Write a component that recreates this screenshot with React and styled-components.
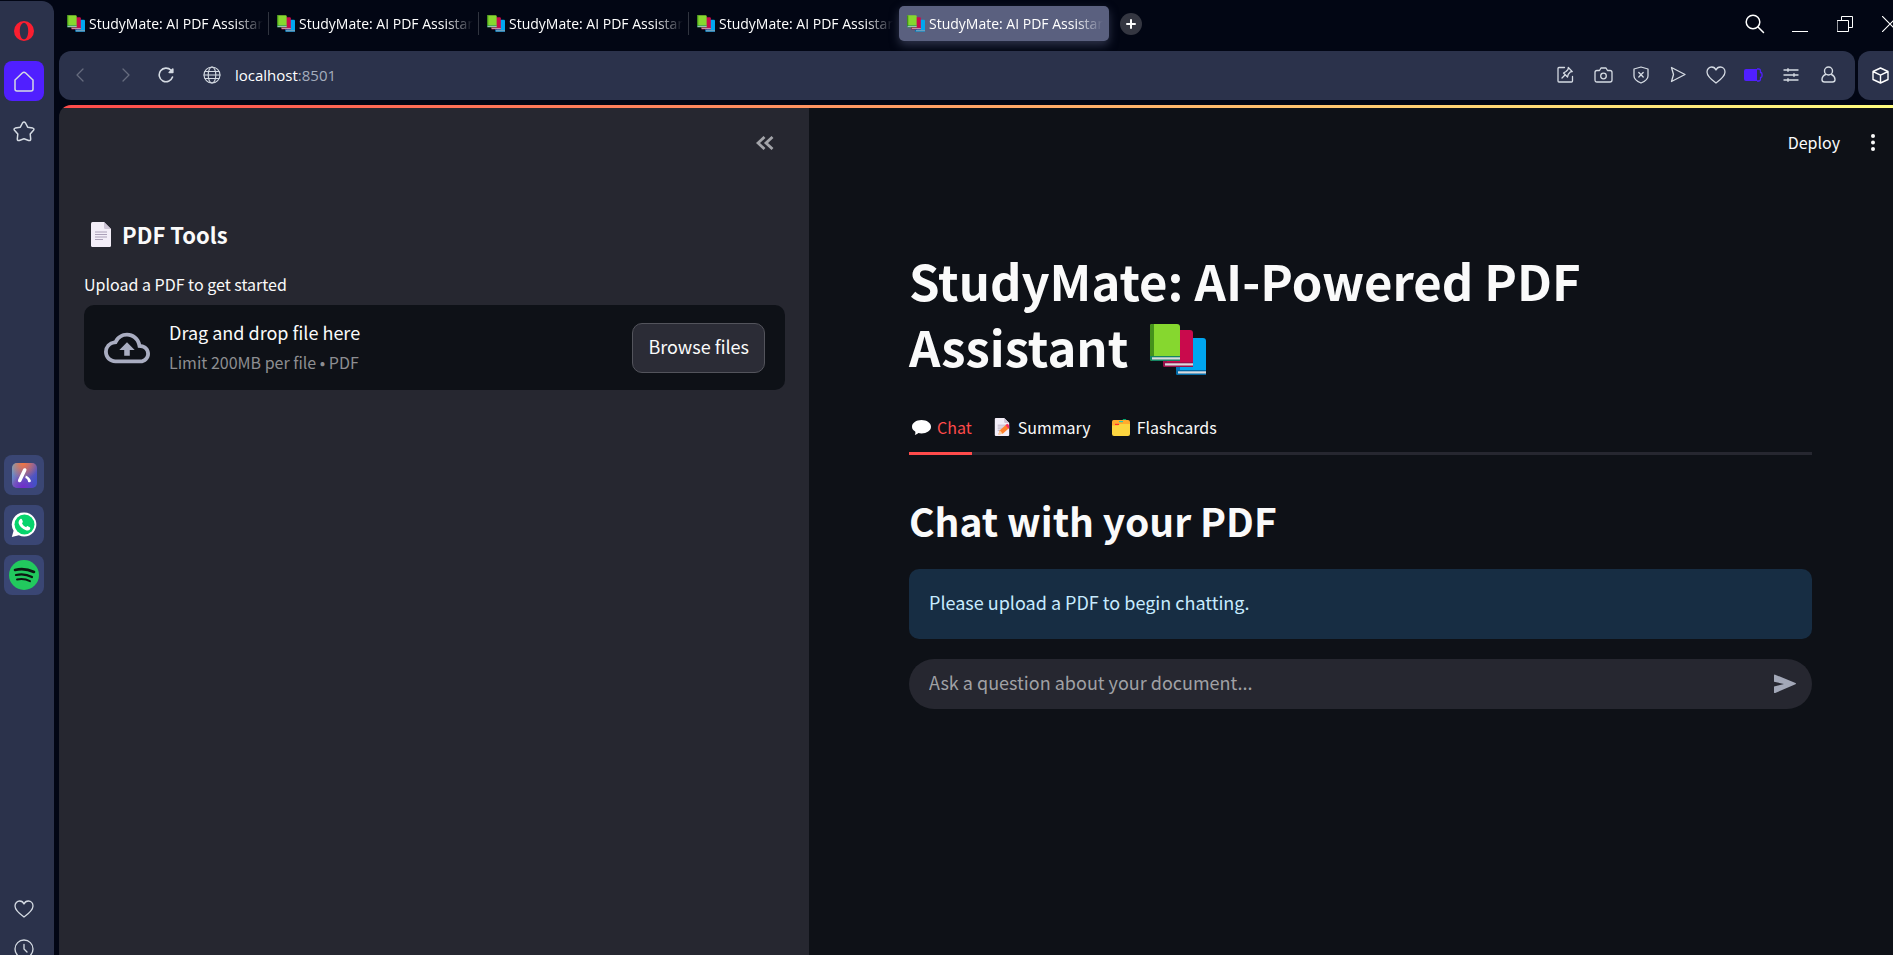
import React, { useState } from "react";
import styled, { createGlobalStyle } from "styled-components";

const GlobalStyle = createGlobalStyle`
  *, *::before, *::after { box-sizing: border-box; }
  body { margin: 0; background: #020614; }
  h1, h2, h3, p { margin: 0; }
  button { font: inherit; color: inherit; background: none; border: 0; padding: 0; cursor: pointer; }
  svg { display: block; flex: none; }
`;

const browserFont = `"Open Sans", "Noto Sans", sans-serif`;
const appFont = `"Noto Sans CJK JP", "Noto Sans", sans-serif`;

/* ---------- browser window ---------- */

const Window = styled.div`
  display: flex;
  gap: 5px;
  height: 100vh;
  overflow: hidden;
  background: #020614;
  color: #fff;
  font-family: ${browserFont};
`;

const Rail = styled.nav`
  flex: none;
  display: flex;
  flex-direction: column;
  width: 54px;
  margin-top: 1px;
  padding: 10px 10px 0 4px;
  border-radius: 0 12px 0 0;
  background: #2b324b;
  color: #d5dbe3;
  overflow: hidden;
`;

const RailGroup = styled.div`
  display: flex;
  flex-direction: column;
  gap: ${(p) => p.$gap || 0}px;
  margin-top: ${(p) => p.$top || "0"};
  margin-bottom: ${(p) => p.$bottom || "0"};
`;

const RailButton = styled.button`
  display: grid;
  place-items: center;
  width: 40px;
  height: 40px;
  border-radius: 8px;
  background: ${(p) => p.$fill || "transparent"};
`;

const Stage = styled.div`
  flex: 1;
  min-width: 0;
  display: flex;
  flex-direction: column;
`;

const TabStrip = styled.header`
  flex: none;
  display: flex;
  align-items: center;
  justify-content: space-between;
  height: 51px;
  padding-bottom: 4px;
  overflow: hidden;
`;

const TabList = styled.div`
  display: flex;
  align-items: center;
`;

const BrowserTab = styled.button`
  display: flex;
  align-items: center;
  gap: 4px;
  width: 210px;
  height: 35px;
  padding: 0 6px 0 8px;
  border-radius: 5px;
  font-size: 14px;
  line-height: 20px;
  background: ${(p) => (p.$active ? "#5a607f" : "transparent")};
  box-shadow: ${(p) => (p.$active ? "0 4px 10px rgba(90, 96, 127, 0.5)" : "none")};
`;

const TabTitle = styled.span`
  flex: 1;
  min-width: 0;
  overflow: hidden;
  white-space: nowrap;
  text-align: left;
  mask-image: linear-gradient(to right, #000 84%, transparent 100%);
`;

const TabDivider = styled.span`
  width: 1px;
  height: 23px;
  margin-left: -1px;
  background: #30343f;
`;

const NewTab = styled.button`
  display: grid;
  place-items: center;
  width: 22px;
  height: 22px;
  margin-left: 11px;
  border-radius: 50%;
  background: #343641;
`;

const WindowControls = styled.div`
  display: flex;
  margin-right: -19px;
`;

const ControlButton = styled.button`
  display: grid;
  place-items: center;
  width: 45px;
  height: 40px;
`;

const AddressRow = styled.div`
  flex: none;
  display: flex;
  gap: 3px;
  height: 49px;
  margin-bottom: 5px;
`;

const AddressBar = styled.div`
  flex: 1;
  display: flex;
  align-items: center;
  justify-content: space-between;
  padding: 0 8px 2px 8px;
  border-radius: 12px;
  background: #2b324b;
  color: #d5dbe3;
`;

const BarGroup = styled.div`
  display: flex;
  align-items: center;
`;

const BarButton = styled.button`
  display: grid;
  place-items: center;
  width: ${(p) => p.$width || 37}px;
  height: 40px;
  color: ${(p) => (p.$dim ? "#666c7e" : "inherit")};
`;

const SiteButton = styled(BarButton)`
  margin-left: 17px;
`;

const UrlText = styled.a`
  font-size: 15px;
  line-height: 20px;
  color: #fff;
  text-decoration: none;
`;

const Port = styled.span`
  color: #a4adbd;
`;

const PanelToggle = styled.button`
  display: grid;
  place-items: center;
  width: 35px;
  padding-left: 9px;
  border-radius: 12px 0 0 12px;
  background: #2b324b;
  color: #fff;
`;

/* ---------- page inside the window ---------- */

const Page = styled.div`
  flex: 1;
  min-height: 0;
  display: flex;
  flex-direction: column;
  border-radius: 12px 0 0 0;
  overflow: hidden;
  background: #0e1117;
  color: #fafafa;
  font-family: ${appFont};
  font-size: 18px;
  line-height: 30px;
`;

const Decoration = styled.div`
  flex: none;
  height: 3px;
  background: linear-gradient(90deg, #ff4b4b, #fffd80);
`;

const Columns = styled.div`
  flex: 1;
  min-height: 0;
  display: flex;
`;

const Sidebar = styled.aside`
  flex: none;
  width: 750px;
  padding: 20px 24px 0 25px;
  background: #262730;
`;

const SidebarHeader = styled.div`
  display: flex;
  justify-content: flex-end;
  height: 87px;
`;

const CollapseButton = styled.button`
  display: grid;
  place-items: center;
  width: 41px;
  height: 30px;
`;

const SidebarTitle = styled.h3`
  display: flex;
  align-items: center;
  gap: 5px;
  height: 38px;
  font-size: 22px;
  line-height: 30px;
  font-weight: 700;
`;

const Emoji = styled.span`
  display: grid;
  place-items: center;
  width: ${(p) => p.$width}px;
`;

const UploadLabel = styled.label`
  display: block;
  margin: 18px 0 8px;
  font-size: 16px;
  line-height: 26px;
`;

const DropZone = styled.div`
  display: flex;
  align-items: center;
  gap: 19px;
  height: 85px;
  padding: 0 20px;
  border-radius: 10px;
  background: #0e1117;
`;

const DropText = styled.div`
  flex: 1;
  padding-bottom: 1px;
`;

const Limit = styled.p`
  font-size: 16px;
  color: #8d8e91;
`;

const HiddenFile = styled.input`
  display: none;
`;

const BrowseButton = styled.button`
  height: 50px;
  padding: 0 15px 3px;
  border: 1px solid #53545c;
  border-radius: 10px;
  background: #2b2c36;
`;

const Main = styled.main`
  flex: 1;
  min-width: 0;
`;

const AppHeader = styled.div`
  display: flex;
  align-items: center;
  justify-content: flex-end;
  gap: 24px;
  height: 70px;
  padding: 0 12px 2px 0;
  font-size: 16px;
`;

const MenuButton = styled.button`
  display: grid;
  place-items: center;
  width: 17px;
  height: 30px;
`;

const Content = styled.div`
  padding: 69px 81px 0 100px;
`;

const Title = styled.h1`
  font-size: 49px;
  line-height: 66px;
  font-weight: 700;
`;

const InlineIcon = styled.span`
  display: inline-block;
  margin-left: 10px;
  vertical-align: -8px;
`;

const TabBar = styled.div`
  display: flex;
  gap: 18px;
  margin-top: 23px;
  border-bottom: 3px solid #262730;
`;

const AppTab = styled.button`
  display: flex;
  align-items: center;
  gap: 4px;
  height: 53px;
  margin-bottom: -3px;
  border-bottom: 3px solid ${(p) => (p.$active ? "#ff4b4b" : "transparent")};
  color: ${(p) => (p.$active ? "#ff4b4b" : "inherit")};
  font-size: 16px;
`;

const SectionTitle = styled.h2`
  margin: 38px 0 22px;
  font-size: 39px;
  line-height: 54px;
  font-weight: 700;
`;

const Notice = styled.p`
  padding: 18px 20px 22px;
  border-radius: 10px;
  background: #172d43;
  color: #c7ebff;
`;

const ChatForm = styled.form`
  display: flex;
  align-items: center;
  height: 50px;
  margin-top: 20px;
  padding: 0 15px 0 20px;
  border-radius: 25px;
  background: #262730;
`;

const ChatInput = styled.input`
  flex: 1;
  min-width: 0;
  height: 34px;
  padding: 0 0 4px;
  border: 0;
  outline: 0;
  background: transparent;
  color: #fafafa;
  font: inherit;
  &::placeholder { color: #a0a1a5; opacity: 1; }
`;

/* ---------- drawings ---------- */

const Line = ({ w = 20, h = w, box = `0 0 ${w} ${h}`, sw = 1.3, children }) => (
  <svg width={w} height={h} viewBox={box} fill="none" stroke="currentColor" strokeWidth={sw}
    strokeLinecap="round" strokeLinejoin="round" aria-hidden="true">{children}</svg>
);

const Book = ({ x, y, main, edge, base }) => (
  <g transform={`translate(${x} ${y})`}>
    <path d="M2 0h25q3 0 3 3v34H2q-2 0-2-2V2q0-2 2-2z" fill={main} />
    <path d="M2 0h2v33H0V2q0-2 2-2z" fill={edge} />
    <path d="M0 32h30v5H2q-2 0-2-2z" fill={base} />
    <path d="M2 33.3h28v2.2H2z" fill="#d9dadd" />
  </g>
);

const Books = ({ w, h }) => (
  <svg width={w} height={h} viewBox="0 0 56 51" aria-hidden="true">
    <Book x={26} y={14} main="#00a6f0" edge="#0074ba" base="#0069a5" />
    <Book x={13} y={6} main="#c90a4c" edge="#99104a" base="#99104a" />
    <Book x={0} y={0} main="#86d72f" edge="#44911b" base="#148463" />
  </svg>
);

const Sheet = ({ w, h, pencil }) => (
  <svg width={w} height={h} viewBox="0 0 20 25" aria-hidden="true">
    <path d="M1.500 0H13l7 7v16.500q0 1.500-1.500 1.500h-17Q0 25 0 23.500v-22Q0 0 1.500 0z" fill="#f3eef8" />
    <path d="M13 0l7 7h-5.500Q13 7 13 5.500z" fill="#cdc4d6" />
    <path d="M4 10h12M4 12.500h12M4 15h12M4 17.500h8" stroke="#aba0b8" strokeWidth="1" />
    {pencil && (
      <g>
        <path d="M5 23l2-6 9-8 4 5-9 8z" fill="#ff822d" />
        <path d="M5 23l2-6 4 5z" fill="#fcd0a1" />
        <path d="M15 10l2-2q2 0 3 3v2l-1 2z" fill="#f92f60" />
      </g>
    )}
  </svg>
);

const Bubble = () => (
  <svg width="19" height="15" viewBox="0 0 19 15" aria-hidden="true">
    <path d="M9.500 0C14.700 0 19 2.900 19 6.700s-4.300 6.700-9.500 6.700c-1.200 0-2.200-.1-3.200-.4-1 .9-2.500 1.800-3.600 1.800.7-.8.9-2 .5-3.300C1.200 10.300 0 8.600 0 6.700 0 2.900 4.300 0 9.500 0z" fill="#fff" />
  </svg>
);

const CardIndex = () => (
  <svg width="18" height="17" viewBox="0 0 18 17" aria-hidden="true">
    <path d="M11 0h3l1 3h-5z" fill="#00a66d" />
    <path d="M1.500 1H16q2 0 2 2v5H0V2.500Q0 1 1.500 1z" fill="#ffab2e" />
    <path d="M0 6.500h6l2-1.500h10V15q0 2-2 2H2q-2 0-2-2z" fill="#fcd53f" />
    <path d="M3 4.800h4v1.200H3z" fill="#f8312f" />
    <path d="M7 2h4v1.200H7z" fill="#26c9ae" />
  </svg>
);

const Heart = ({ w = 20 }) => (
  <Line w={w} h={18} box="0 0 20 18"><path d="M10 17C6.500 14.500 1 10.500 1 6c0-2.800 2-5 4.700-5C7.500 1 9.200 2 10 4c.8-2 2.500-3 4.300-3C17 1 19 3.200 19 6c0 4.500-5.500 8.500-9 11z" /></Line>
);

const Opera = () => (
  <svg width="20" height="20" viewBox="0 0 20 20" aria-hidden="true">
    <path fillRule="evenodd" d="M10 0a10 10 0 100 20 10 10 0 000-20zm0 1.700c2.500 0 4.200 3.600 4.200 8.300s-1.700 8.300-4.200 8.300S5.800 14.700 5.800 10 7.500 1.700 10 1.700z" fill="#fa1e30" />
  </svg>
);

const Aria = () => (
  <svg width="25" height="25" viewBox="0 0 25 25" aria-hidden="true">
    <defs>
      <linearGradient id="ariaBase" x1="0" y1="0" x2="1" y2="0.6">
        <stop offset="0" stopColor="#58b8dc" /><stop offset=".45" stopColor="#7562b8" /><stop offset="1" stopColor="#4451c4" />
      </linearGradient>
      <radialGradient id="ariaTop" cx=".45" cy="0" r=".65">
        <stop offset="0" stopColor="#f5753f" /><stop offset="1" stopColor="#f5753f" stopOpacity="0" />
      </radialGradient>
      <radialGradient id="ariaLow" cx=".45" cy="1" r=".5">
        <stop offset="0" stopColor="#7429cd" /><stop offset="1" stopColor="#7429cd" stopOpacity="0" />
      </radialGradient>
    </defs>
    <rect width="25" height="25" rx="5" fill="url(#ariaBase)" />
    <rect width="25" height="25" rx="5" fill="url(#ariaTop)" />
    <rect width="25" height="25" rx="5" fill="url(#ariaLow)" />
    <path d="M12.700 7L7.700 17.500" stroke="#fff" strokeWidth="3.600" strokeLinecap="round" />
    <path d="M13.800 12.500q4 1.500 5.200 5.500-.8 2-2.800 1-.6-3.500-2.900-4z" fill="#fff" />
  </svg>
);

const WhatsApp = () => (
  <svg width="26" height="26" viewBox="0 0 26 26" aria-hidden="true">
    <path d="M13.500.5a12 12 0 11-5.600 22.700L.8 25l1.800-6.300A12 12 0 0113.500.5z" fill="#fff" />
    <circle cx="13.500" cy="12.500" r="10" fill="#06d46c" />
    <path d="M9.200 7.200c.8-.6 1.500-.4 1.900.5l.7 1.700c.2.600-.2 1.100-.8 1.800.8 1.800 2.300 3.200 4.200 4 .6-.8 1-1.300 1.600-1l2 1c.7.4.6 1.500.1 2.200-.8 1-2.300 1.300-4 .8-3.500-1.100-6.100-3.500-7.200-6.600-.5-1.700.3-3.400 1.500-4.400z" fill="#fff" />
  </svg>
);

const Spotify = () => (
  <svg width="30" height="30" viewBox="0 0 30 30" fill="none" strokeLinecap="round" aria-hidden="true">
    <circle cx="15" cy="15" r="15" fill="#22c95e" />
    <path d="M6 10q9.500-2.500 19 2" stroke="#0c1711" strokeWidth="2.600" />
    <path d="M7 15q8.500-2 16 2" stroke="#0c1711" strokeWidth="2.200" />
    <path d="M8 19.500q7-1.500 13 1.700" stroke="#0c1711" strokeWidth="1.900" />
  </svg>
);

const tabTitle = "StudyMate: AI PDF Assistant";
const appTabs = [
  { name: "Chat", icon: <Bubble /> },
  { name: "Summary", icon: <Sheet w={16} h={18} pencil /> },
  { name: "Flashcards", icon: <CardIndex /> },
];

export default function App() {
  const [active, setActive] = useState("Chat");
  const [question, setQuestion] = useState("");

  return (
    <Window>
      <GlobalStyle />
      <Rail aria-label="Browser sidebar">
        <RailGroup $gap={10}>
          <RailButton aria-label="Opera menu"><Opera /></RailButton>
          <RailButton aria-label="Home" $fill="#501fff">
            <Line w={20} h={21} sw={1.5}><path d="M1 9l7.300-7q1.700-1.600 3.400 0L19 9v9q0 2-2 2H3q-2 0-2-2z" /></Line>
          </RailButton>
          <RailButton aria-label="Bookmarks">
            <Line w={22} h={21} sw={1.5}><path d="M9.500 2q1.500-2 3 0l2.200 4.200 5 .9q2 .6.800 2.200l-3.300 3.700.5 5q0 2-2 1.500L11 17.800l-4.700 1.700q-2 .5-2-1.500l.5-5L1.500 9.300Q.3 7.700 2.300 7.100l5-.9z" /></Line>
          </RailButton>
        </RailGroup>
        <RailGroup $gap={10} $top="304px">
          <RailButton aria-label="Aria" $fill="#3a4674"><Aria /></RailButton>
          <RailButton aria-label="WhatsApp" $fill="#3a4674"><WhatsApp /></RailButton>
          <RailButton aria-label="Spotify" $fill="#3a4674"><Spotify /></RailButton>
        </RailGroup>
        <RailGroup $top="auto" $bottom="-14px">
          <RailButton aria-label="Favourites"><Heart w={20} /></RailButton>
          <RailButton aria-label="History">
            <Line w={20}><circle cx="10" cy="10" r="9" /><path d="M10 5.500V10l3 3" /></Line>
          </RailButton>
        </RailGroup>
      </Rail>

      <Stage>
        <TabStrip>
          <TabList>
            {[0, 1, 2, 3, 4].map((n) => (
              <React.Fragment key={n}>
                <BrowserTab $active={n === 4}>
                  <Books w={18} h={17} />
                  <TabTitle>{tabTitle}</TabTitle>
                </BrowserTab>
                {n < 3 && <TabDivider />}
              </React.Fragment>
            ))}
            <NewTab aria-label="New tab">
              <Line w={10} sw={2}><path d="M5 1v8M1 5h8" /></Line>
            </NewTab>
          </TabList>
          <WindowControls>
            <ControlButton aria-label="Search tabs">
              <Line w={20} sw={1.5}><circle cx="8" cy="8" r="6.800" /><path d="M13 13l5.500 5.500" /></Line>
            </ControlButton>
            <ControlButton aria-label="Minimise"><Line w={16} sw={1}><path d="M0 15.500h16" /></Line></ControlButton>
            <ControlButton aria-label="Restore">
              <Line w={16} sw={1}><path d="M.5 4.500h11v11H.5zM4.500 4.500v-4h11v11h-4" /></Line>
            </ControlButton>
            <ControlButton aria-label="Close"><Line w={16} sw={1.2}><path d="M0 0l16 16M16 0L0 16" /></Line></ControlButton>
          </WindowControls>
        </TabStrip>

        <AddressRow>
          <AddressBar>
            <BarGroup>
              <BarButton $dim $width={26} aria-label="Back"><Line w={8} h={14}><path d="M7 1L1 7l6 6" /></Line></BarButton>
              <BarButton $dim $width={65} aria-label="Forward"><Line w={8} h={14}><path d="M1 1l6 6-6 6" /></Line></BarButton>
              <BarButton $width={14} aria-label="Reload">
                <Line w={16} sw={1.6}><path d="M14.500 10A6.800 6.800 0 1113 3.300" /><path d="M14.800 2v3.500h-3.600z" fill="currentColor" /></Line>
              </BarButton>
              <SiteButton $width={46} aria-label="Site information">
                <Line w={18} sw={1.1}><circle cx="9" cy="9" r="8" /><ellipse cx="9" cy="9" rx="3.800" ry="8" /><path d="M1 9h16M2 5.500h14M2 12.500h14" /></Line>
              </SiteButton>
              <UrlText href="#top">localhost<Port>:8501</Port></UrlText>
            </BarGroup>
            <BarGroup>
              <BarButton aria-label="Pin page">
                <Line w={17}><path d="M7.500 1.500H2Q1 1.500 1 2.500V15q0 1 1 1h12.500q1 0 1-1V10.500M5 12l3-3M6.500 7l4 4 .8-2.800 2.200-2.400 1.800-.2L11.300 1.500l-.3 2-2 2z" /></Line>
              </BarButton>
              <BarButton $width={38} aria-label="Snapshot">
                <Line w={19} h={16}><path d="M3 3.500h2.500L7 1h5l1.500 2.500H16q2 0 2 2V13q0 2-2 2H3q-2 0-2-2V5.500q0-2 2-2z" /><circle cx="9.500" cy="9" r="2.800" /></Line>
              </BarButton>
              <BarButton aria-label="Tracker blocker">
                <Line w={16} h={18}><path d="M8 1l7 2v7c0 3-3.500 5.500-7 7-3.500-1.500-7-4-7-7V3zM5.800 6.500l4.400 4.500M10.200 6.500L5.800 11" /></Line>
              </BarButton>
              <BarButton $width={38} aria-label="Flow"><Line w={16} h={17}><path d="M1.500 1.500L15 8.500l-13.500 7 2-7z" /></Line></BarButton>
              <BarButton aria-label="Save to favourites"><Heart w={20} /></BarButton>
              <BarButton $width={38} aria-label="Battery saver">
                <svg width="19" height="14" viewBox="0 0 19 14" aria-hidden="true">
                  <path d="M2 1h11v12H2q-2 0-2-2V3q0-2 2-2z" fill="#501fff" />
                  <path d="M13 1h2q1.500 0 1.500 2v1.500q1.500 0 1.500 1.500v2q0 1.500-1.500 1.500V11q0 2-1.500 2h-2" fill="none" stroke="#501fff" strokeWidth="1.300" />
                </svg>
              </BarButton>
              <BarButton aria-label="Easy setup">
                <Line w={16} h={14} sw={1.4}><path d="M1 2h14M1 7h14M1 12h14M5 .8v2.400M11 5.800v2.400M5 10.800v2.400" /></Line>
              </BarButton>
              <BarButton $width={38} aria-label="Profile">
                <Line w={15} h={17} sw={1.4}><circle cx="7.500" cy="5" r="4" /><path d="M4.500 8.500C2.500 9.500 1 11.500 1 13.500 1 15.200 2 16 3.500 16h8c1.500 0 2.500-.8 2.500-2.500 0-2-1.500-4-3.500-5" /></Line>
              </BarButton>
            </BarGroup>
          </AddressBar>
          <PanelToggle aria-label="Open side panel">
            <Line w={17} sw={1.4}><path d="M8.500 1L16 4.500v8L8.500 16 1 12.500v-8zM1 4.500l7.500 3.700L16 4.500M8.500 8.200V16" /></Line>
          </PanelToggle>
        </AddressRow>

        <Page>
          <Decoration />
          <Columns>
            <Sidebar>
              <SidebarHeader>
                <CollapseButton aria-label="Collapse sidebar">
                  <svg width="18" height="14" viewBox="0 0 18 14" fill="none" stroke="#a3a4a9" strokeWidth="2.800" aria-hidden="true">
                    <path d="M8.500 1L2 7l6.500 6M16.500 1L10 7l6.500 6" />
                  </svg>
                </CollapseButton>
              </SidebarHeader>
              <SidebarTitle><Emoji $width={33}><Sheet w={20} h={25} /></Emoji>PDF Tools</SidebarTitle>
              <UploadLabel htmlFor="pdf">Upload a PDF to get started</UploadLabel>
              <DropZone>
                <svg width="46" height="46" viewBox="0 0 24 24" fill="#a9adc1" aria-hidden="true">
                  <path d="M19.350 10.040A7.490 7.490 0 0012 4C9.110 4 6.600 5.640 5.350 8.040A5.994 5.994 0 000 14c0 3.310 2.690 6 6 6h13c2.760 0 5-2.240 5-5 0-2.640-2.050-4.780-4.650-4.960zM19 18H6c-2.210 0-4-1.790-4-4 0-2.050 1.530-3.760 3.560-3.970l1.070-.11.5-.95A5.469 5.469 0 0112 6c2.620 0 4.880 1.860 5.390 4.430l.3 1.500 1.530.11A2.980 2.980 0 0122 15c0 1.650-1.350 3-3 3zM8 13h2.550v3h2.900v-3H16l-4-4z" />
                </svg>
                <DropText>
                  <p>Drag and drop file here</p>
                  <Limit>Limit 200MB per file • PDF</Limit>
                </DropText>
                <HiddenFile id="pdf" type="file" accept="application/pdf" />
                <BrowseButton type="button" onClick={() => document.getElementById("pdf").click()}>Browse files</BrowseButton>
              </DropZone>
            </Sidebar>

            <Main>
              <AppHeader>
                <button type="button">Deploy</button>
                <MenuButton aria-label="Main menu">
                  <svg width="4" height="17" viewBox="0 0 4 17" fill="#fafafa" aria-hidden="true">
                    <circle cx="2" cy="2" r="2" /><circle cx="2" cy="8.500" r="2" /><circle cx="2" cy="15" r="2" />
                  </svg>
                </MenuButton>
              </AppHeader>
              <Content>
                <Title>
                  StudyMate: AI-Powered PDF<br />Assistant <InlineIcon><Books w={56} h={51} /></InlineIcon>
                </Title>
                <TabBar role="tablist">
                  {appTabs.map((t) => (
                    <AppTab key={t.name} role="tab" aria-selected={active === t.name}
                      $active={active === t.name} onClick={() => setActive(t.name)}>
                      <Emoji $width={24}>{t.icon}</Emoji>{t.name}
                    </AppTab>
                  ))}
                </TabBar>
                <SectionTitle>Chat with your PDF</SectionTitle>
                <Notice>Please upload a PDF to begin chatting.</Notice>
                <ChatForm onSubmit={(e) => e.preventDefault()}>
                  <ChatInput aria-label="Question" placeholder="Ask a question about your document..."
                    value={question} onChange={(e) => setQuestion(e.target.value)} />
                  <button type="submit" aria-label="Send">
                    <svg width="24" height="20" viewBox="0 0 24 20" fill="#a3a8b8" aria-hidden="true">
                      <path d="M1 1.500Q1 .3 2.200.7L22.500 9q1 .6 0 1.200L2.200 19Q1 19.400 1 18.200v-5.700L11 10 1 7.800z" />
                    </svg>
                  </button>
                </ChatForm>
              </Content>
            </Main>
          </Columns>
        </Page>
      </Stage>
    </Window>
  );
}
